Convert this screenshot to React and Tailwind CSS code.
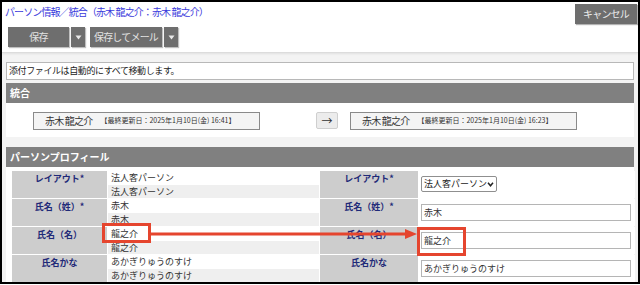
import React from 'react';

const font = "font-['Noto_Sans_CJK_JP','Noto_Sans',sans-serif]";

function Caret() {
  return (
    <svg width="7" height="5" viewBox="0 0 7 5">
      <path d="M0.5 0.5 L6.5 0.5 L3.5 4.5 Z" fill="#e8e8e8" />
    </svg>
  );
}

function SplitButton({ label, w }) {
  return (
    <div className="flex gap-[2px]">
      <div className={`${w} h-[20px] bg-[#6e6e6e] text-[#e2e2e2] text-[10px] tracking-[-0.8px] leading-[20px] text-center whitespace-nowrap shadow-[1px_1px_1px_rgba(0,0,0,0.25)]`}>
        {label}
      </div>
      <div className="w-[14px] h-[20px] bg-[#6e6e6e] flex items-center justify-center shadow-[1px_1px_1px_rgba(0,0,0,0.25)]">
        <Caret />
      </div>
    </div>
  );
}

function SectionHeader({ children }) {
  return (
    <div className="h-[20px] bg-[#808080] text-white font-bold text-[10px] leading-[20px] pl-[4px] whitespace-nowrap">
      {children}
    </div>
  );
}

function MergeBox({ date }) {
  return (
    <div className="w-[227px] h-[18px] bg-[#f4f4f4] border border-[#8a8a8a] flex items-center pl-[11px] gap-[8px] whitespace-nowrap">
      <span className="text-[10px] tracking-[-0.8px] text-[#333]">赤木 龍之介</span>
      <span className="text-[7px] text-[#333]">【最終更新日：2025年1月10日(金) {date}】</span>
    </div>
  );
}

function Label({ children }) {
  return (
    <div className="bg-[#cdcdcd] text-[#1f2a78] font-bold text-[9px] leading-[14px] text-center pt-[1px] whitespace-nowrap">
      {children}
    </div>
  );
}

function Values({ a, b }) {
  return (
    <div className="flex flex-col text-[9px] text-[#333] leading-[13px] whitespace-nowrap">
      <div className="h-[14px] bg-white pl-[3px]">{a}</div>
      <div className="h-[13px] bg-[#efefef] pl-[3px]">{b}</div>
    </div>
  );
}

function InputCell({ value }) {
  return (
    <div className="bg-white pt-[5px] pl-[2px] pr-[4px]">
      <div className="h-[17px] border border-[#b5b5b5] text-[9px] text-[#333] leading-[15px] pl-[2px] whitespace-nowrap">
        {value}
      </div>
    </div>
  );
}

const rows = [
  { label: 'レイアウト*', a: '法人客パーソン', b: '法人客パーソン', select: true },
  { label: '氏名（姓）*', a: '赤木', b: '赤木', value: '赤木' },
  { label: '氏名（名）', a: '龍之介', b: '龍之介', value: '龍之介' },
  { label: '氏名かな', a: 'あかぎりゅうのすけ', b: 'あかぎりゅうのすけ', value: 'あかぎりゅうのすけ' },
];

export default function App() {
  return (
    <div className={`${font} w-[640px] h-[285px] bg-white`}>
      <div className="relative w-[640px] h-[284px] border-2 border-black bg-[#f3f3f3] overflow-hidden flex flex-col">
        {/* ヘッダー */}
        <div className="h-[51px] bg-white border-b border-[#dcdcdc] shadow-[0_1px_2px_rgba(0,0,0,0.08)] flex justify-between">
          <div className="pl-[3px] pt-[2px]">
            <div className="text-[10px] tracking-[-0.9px] leading-[16px] text-[#3a3adc] whitespace-nowrap">
              パーソン情報／統合（赤木 龍之介：赤木 龍之介）
            </div>
            <div className="flex gap-[5px] mt-[7px] ml-[3px]">
              <SplitButton label="保存" w="w-[61px]" />
              <SplitButton label="保存してメール" w="w-[72px]" />
            </div>
          </div>
          <div className="pt-[2px] pr-[1px]">
            <div className="w-[62px] h-[20px] bg-[#6e6e6e] text-[#ececec] text-[10px] tracking-[-0.8px] leading-[20px] text-center whitespace-nowrap shadow-[1px_1px_1px_rgba(0,0,0,0.3)]">
              キャンセル
            </div>
          </div>
        </div>

        <div className="px-[4px] pt-[9px]">
          {/* お知らせ */}
          <div className="h-[18px] bg-white border border-[#b8b8b8] text-[9px] tracking-[-0.4px] text-[#222] leading-[16px] pl-[2px] whitespace-nowrap">
            添付ファイルは自動的にすべて移動します。
          </div>

          {/* 統合 */}
          <div className="mt-[3px]">
            <SectionHeader>統合</SectionHeader>
            <div className="h-[34px] bg-white flex items-center pl-[27px] pt-[1px]">
              <MergeBox date="16:41" />
              <div className="ml-[56px] w-[22px] h-[17px] bg-[#ececec] border border-[#cfcfcf] rounded-[2px] text-[11px] text-[#333] leading-[14px] text-center">
                →
              </div>
              <div className="ml-[12px]">
                <MergeBox date="16:23" />
              </div>
            </div>
          </div>

          {/* パーソンプロフィール */}
          <div className="mt-[10px]">
            <SectionHeader>パーソンプロフィール</SectionHeader>
            <div className="bg-white pt-[4px] pl-[6px]">
              <div className="grid grid-cols-[95px_211px_98px_216px] auto-rows-[27px] gap-x-[1px] gap-y-[1px]">
                {rows.map((r) => (
                  <React.Fragment key={r.label}>
                    <Label>{r.label}</Label>
                    <Values a={r.a} b={r.b} />
                    <Label>{r.label}</Label>
                    {r.select ? (
                      <div className="bg-white pt-[5px] pl-[2px]">
                        <div className="w-[76px] h-[16px] border border-[#8f8f8f] rounded-[2px] flex items-center justify-between pl-[2px] pr-[2px] text-[9px] text-[#222] whitespace-nowrap">
                          <span>法人客パーソン</span>
                          <svg width="7" height="5" viewBox="0 0 8 6">
                            <path d="M1 1 L4 4.5 L7 1" stroke="#222" strokeWidth="1.8" fill="none" />
                          </svg>
                        </div>
                      </div>
                    ) : (
                      <InputCell value={r.value} />
                    )}
                  </React.Fragment>
                ))}
              </div>
            </div>
          </div>
        </div>

        {/* 注釈（赤枠と矢印） */}
        <div className="absolute left-[100px] top-[221px] w-[49px] h-[20px] border-[3px] border-[#e5452e]" />
        <div className="absolute left-[415px] top-[225px] w-[49px] h-[29px] border-[3px] border-[#e5452e]" />
        <svg className="absolute left-[147px] top-[226px]" width="270" height="14" viewBox="0 0 270 14">
          <line x1="0" y1="6" x2="258" y2="6" stroke="#e5452e" strokeWidth="3" />
          <path d="M256 1 L268 6 L256 11 Z" fill="#e5452e" />
        </svg>
      </div>
    </div>
  );
}
